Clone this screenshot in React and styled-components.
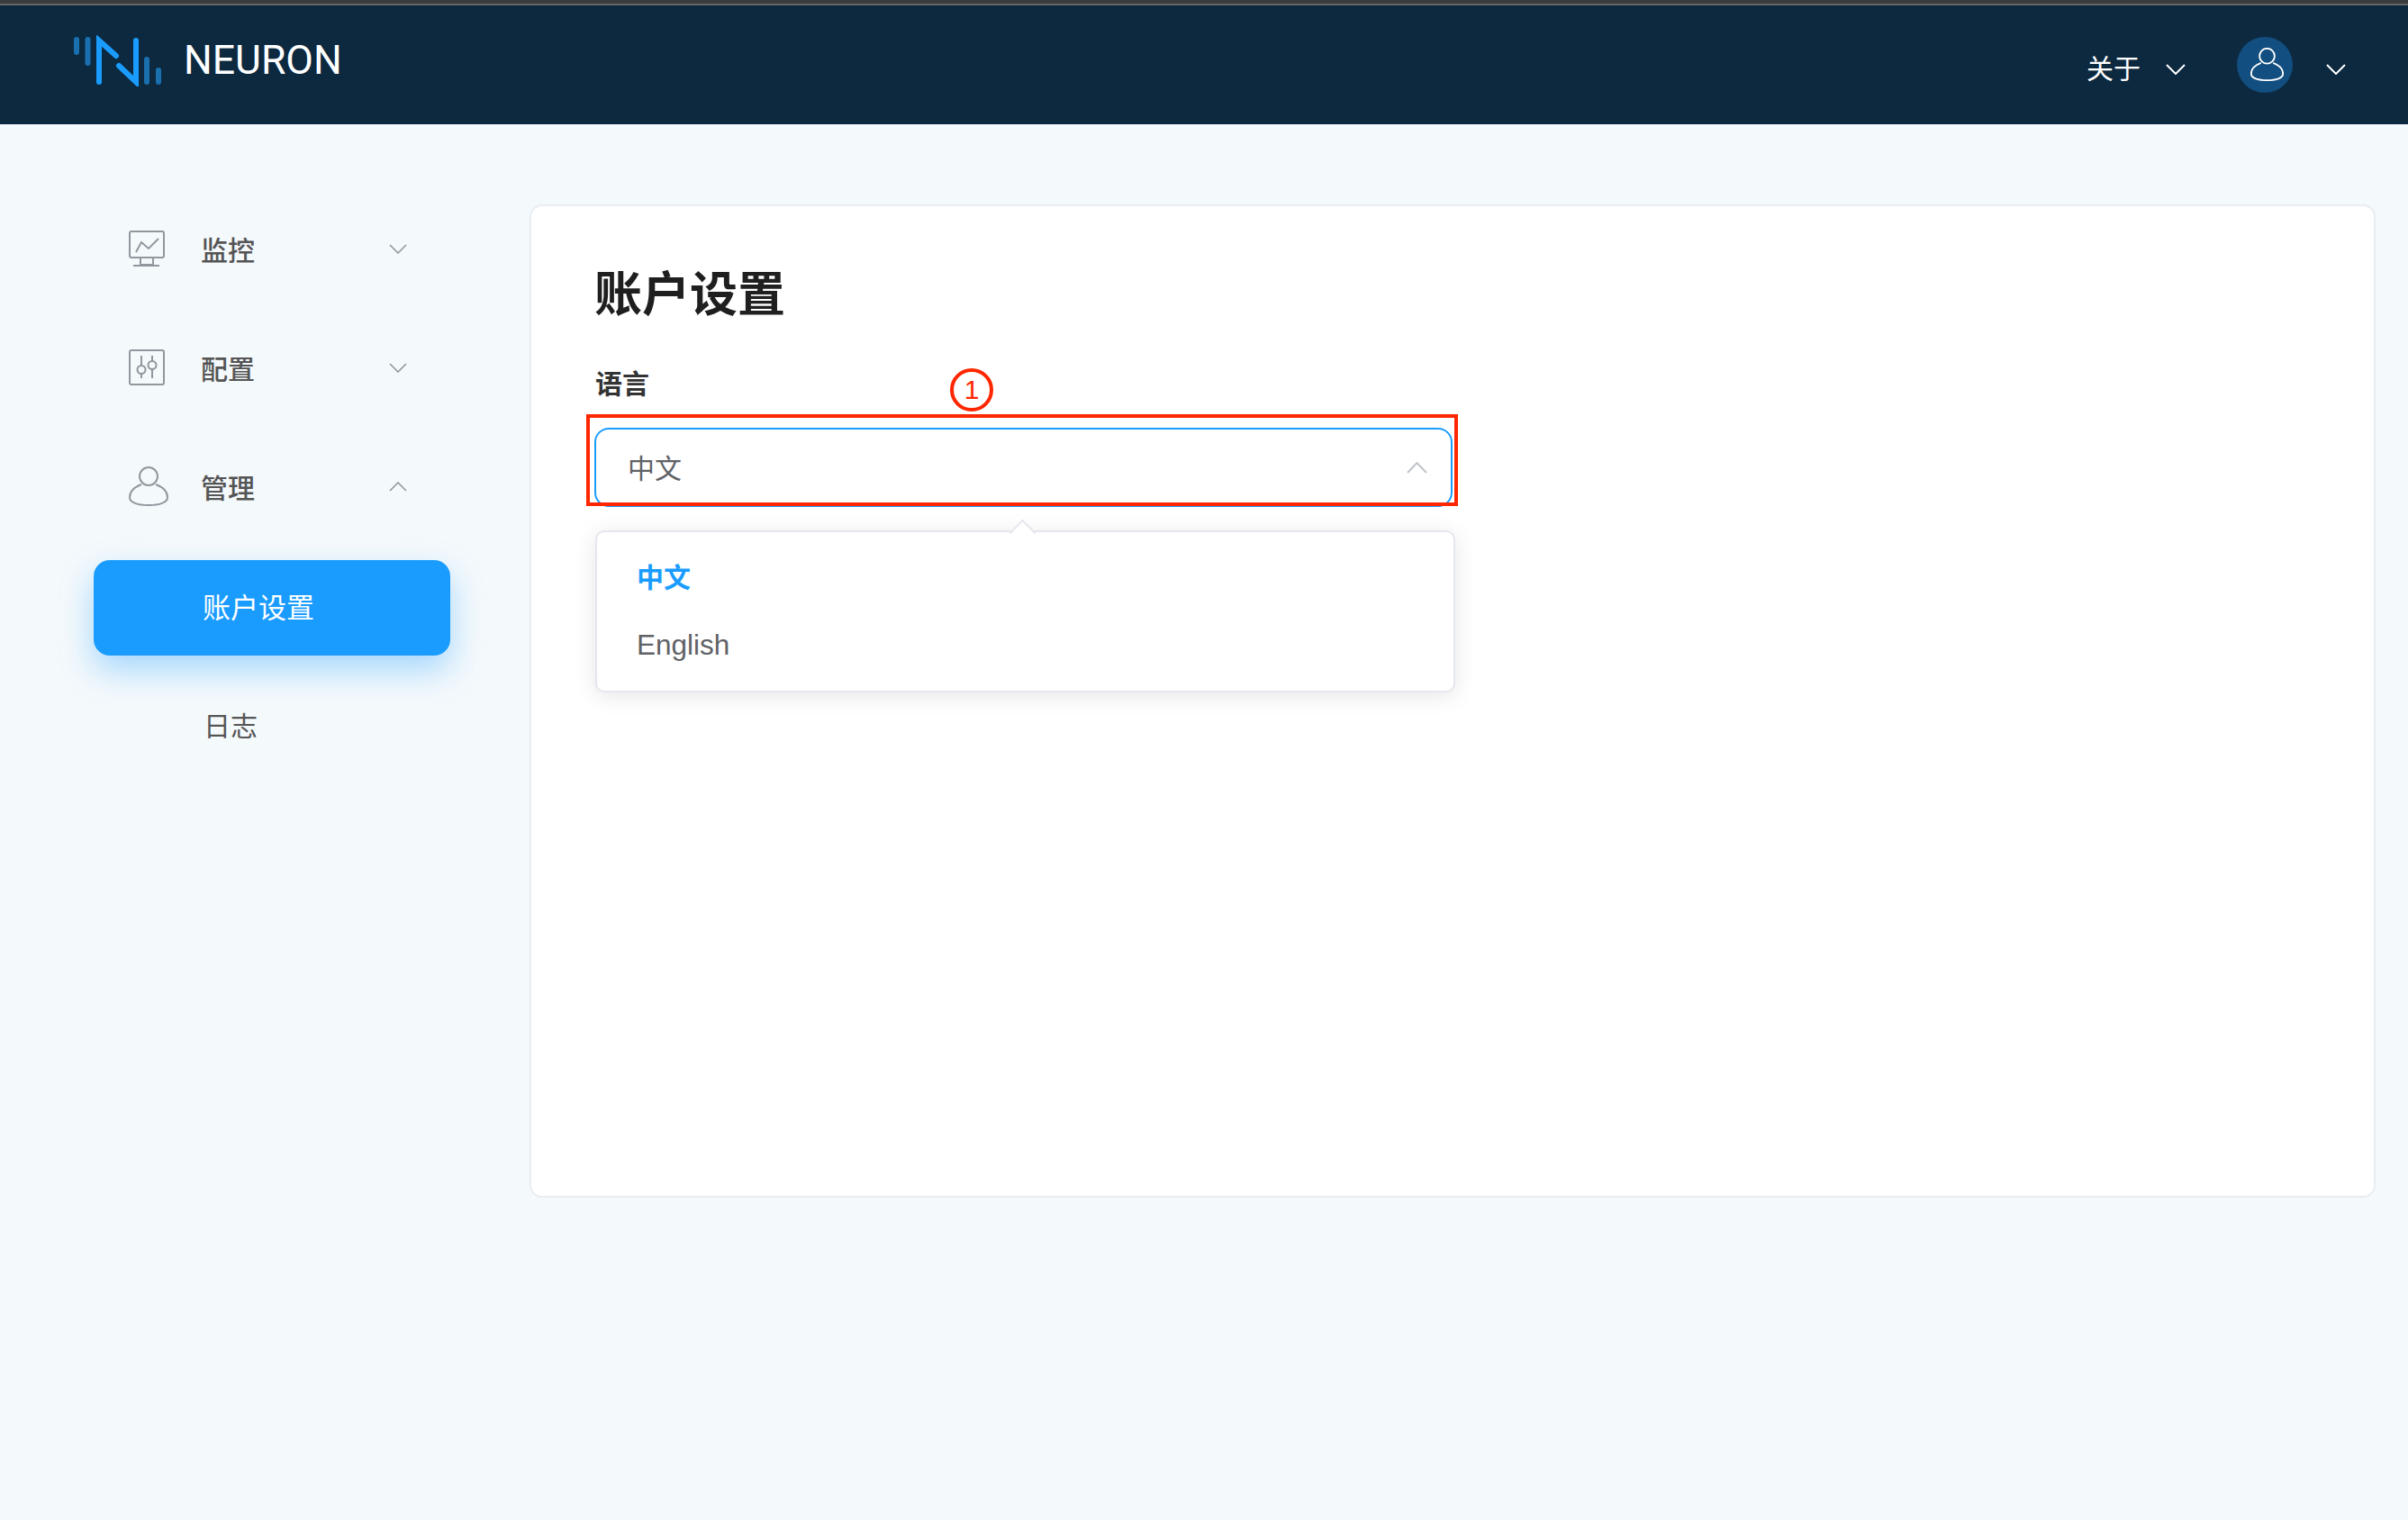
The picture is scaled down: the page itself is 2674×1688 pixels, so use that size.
import React from "react";
import styled, { createGlobalStyle } from "styled-components";

const GlobalStyle = createGlobalStyle`
  html, body {
    margin: 0;
    padding: 0;
    background: #f4f9fc;
  }
  * {
    box-sizing: border-box;
  }
  body {
    font-family: "Liberation Sans", "Noto Sans CJK SC", sans-serif;
  }
`;

const Page = styled.div`
  width: 2674px;
  height: 1688px;
  overflow: hidden;
  background: #f4f9fc;
`;

const Header = styled.header`
  height: 138px;
  background: #0c2940;
  border-top: 4px solid #3c3c3c;
  display: flex;
  align-items: flex-start;
  position: relative;
  &::before {
    content: "";
    display: block;
    position: absolute;
    left: 0;
    right: 0;
    top: 0;
    height: 2px;
    background: #666;
  }
`;

const Logo = styled.div`
  display: flex;
  align-items: center;
  margin: 34px 0 0 80px;
  gap: 22px;
`;

const Brand = styled.span`
  font-family: "Roboto", sans-serif;
  font-size: 44.500px;
  line-height: 58px;
  color: #fff;
`;

const HeaderRight = styled.div`
  margin: 37px 0 0 auto;
  padding-right: 69px;
  display: flex;
  align-items: flex-start;
`;

const HeaderLabel = styled.span`
  font-size: 30px;
  line-height: 62px;
  margin-top: 5px;
  color: #fff;
`;

const Avatar = styled.div`
  width: 62px;
  height: 62px;
  border-radius: 50%;
  background: #124e7f;
  display: flex;
  align-items: center;
  justify-content: center;
  margin: 0 37px 0 57px;
  padding: 0 0 2px 4px;
`;

const Main = styled.div`
  display: flex;
  align-items: flex-start;
`;

const Sidebar = styled.nav`
  width: 396px;
  margin: 85px 88px 0 104px;
  display: flex;
  flex-direction: column;
  gap: 26px;
`;

const MenuItem = styled.div`
  height: 106px;
  display: flex;
  align-items: center;
  padding: 0 48px 0 39px;
  font-size: 30px;
  font-weight: 500;
  color: #555;
`;

const IconSlot = styled.span`
  width: 80px;
  display: flex;
  align-items: center;
`;

const LeafItem = styled.div`
  height: 106px;
  display: flex;
  align-items: center;
  margin-top: ${(p) => (p.$active ? "3px" : "0")};
  padding: ${(p) => (p.$active ? "0 0 5px 121px" : "0 0 6px 122px")};
  font-size: ${(p) => (p.$active ? "31px" : "30px")};
  border-radius: 18px;
  color: ${(p) => (p.$active ? "#fff" : "#555")};
  background: ${(p) => (p.$active ? "#1a9cff" : "transparent")};
  box-shadow: ${(p) =>
    p.$active ? "0 16px 36px rgba(26, 156, 255, 0.36)" : "none"};
`;

const ChevronSvg = styled.svg`
  display: block;
  flex: none;
  margin-left: ${(p) => p.$ml || "0"};
  margin-top: ${(p) => p.$mt || "0"};
`;

const PushRight = styled.span`
  margin-left: auto;
  display: flex;
`;

const Card = styled.section`
  width: 2050px;
  height: 1103px;
  margin-top: 89px;
  background: #fff;
  border: 2px solid #e9edf3;
  border-radius: 14px;
  padding: 69px 70px;
`;

const Title = styled.h1`
  margin: 0;
  font-size: 53px;
  line-height: 60px;
  font-weight: 700;
  color: #1f1f1f;
`;

const FieldLabel = styled.div`
  margin: 49px 0 0 1px;
  font-size: 30px;
  line-height: 40px;
  font-weight: 700;
  color: #333;
`;

const Field = styled.div`
  position: relative;
  width: 953px;
  margin-top: 28px;
`;

const SelectBox = styled.div`
  height: 88px;
  border: 2px solid #1a9cff;
  border-radius: 16px;
  display: flex;
  align-items: center;
  justify-content: space-between;
  padding: 0 26px 0 35px;
  font-size: 30px;
  color: #606266;
`;

const SelectValue = styled.span`
  margin-top: -3px;
`;

const RedFrame = styled.div`
  position: absolute;
  left: -9px;
  top: -15px;
  width: 968px;
  height: 102px;
  border: 4px solid #ff2600;
`;

const Marker = styled.div`
  position: absolute;
  left: 395px;
  top: -66px;
  width: 48px;
  height: 48px;
  border: 4px solid #ff2600;
  border-radius: 50%;
  color: #ff2600;
  font-size: 30px;
  line-height: 40px;
  text-align: center;
`;

const Dropdown = styled.div`
  position: absolute;
  left: 1px;
  top: 114px;
  width: 955px;
  height: 180px;
  background: #fff;
  border: 2px solid #e4e7ed;
  border-radius: 10px;
  box-shadow: 0 4px 24px rgba(0, 0, 0, 0.1);
  padding: 14px 0;
  &::before {
    content: "";
    position: absolute;
    left: 462px;
    top: -10px;
    width: 19px;
    height: 19px;
    background: #fff;
    border-left: 2px solid #e4e7ed;
    border-top: 2px solid #e4e7ed;
    transform: rotate(45deg);
  }
`;

const Option = styled.div`
  height: 74px;
  line-height: 74px;
  padding-left: 44px;
  font-size: ${(p) => (p.$selected ? "30px" : "31.500px")};
  font-weight: ${(p) => (p.$selected ? 700 : 400)};
  color: ${(p) => (p.$selected ? "#1a9cff" : "#606266")};
`;

const Chevron = ({ up, color, width = 22, height = 12, ml, mt, strokeWidth = 2 }) => (
  <ChevronSvg $ml={ml} $mt={mt} width={width} height={height} viewBox={`0 0 ${width} ${height}`} fill="none">
    <polyline
      points={
        up
          ? `1,${height - 1} ${width / 2},1 ${width - 1},${height - 1}`
          : `1,1 ${width / 2},${height - 1} ${width - 1},1`
      }
      stroke={color}
      strokeWidth={strokeWidth}
    />
  </ChevronSvg>
);

const NeuronLogo = () => (
  <svg width="102" height="57" viewBox="80 38 102 57" fill="none" strokeLinecap="round" strokeWidth="6">
    <g stroke="#1a6fae">
      <line x1="85" y1="43" x2="85" y2="57" />
      <line x1="97.500" y1="43" x2="97.500" y2="69" />
      <line x1="163" y1="65" x2="163" y2="90" />
      <line x1="176" y1="77" x2="176" y2="90" />
    </g>
    <g stroke="#1a9cff">
      <polyline points="110,90 110,44 129,61" />
      <polyline points="132,72 151,90 151,44" />
    </g>
  </svg>
);

const UserIcon = ({ size, color, strokeWidth }) => (
  <svg width={size} height={size} viewBox="0 0 44 44" fill="none" stroke={color} strokeWidth={strokeWidth}>
    <circle cx="22" cy="11" r="10" />
    <path d="M14 20C6 23 1 28 1 34.500C1 40 10 43 22 43C34 43 43 40 43 34.500C43 28 38 23 30 20" />
  </svg>
);

const MonitorIcon = () => (
  <svg width="40" height="40" viewBox="0 0 40 40" fill="none" stroke="#92979e" strokeWidth="2">
    <rect x="1" y="1" width="38" height="29" rx="2" />
    <polyline points="8,24 14,13 22,20 33,9" />
    <polyline points="13,30 13,38 27,38 27,30" />
    <line x1="5" y1="39" x2="34" y2="39" />
  </svg>
);

const SlidersIcon = () => (
  <svg width="40" height="40" viewBox="0 0 40 40" fill="none" stroke="#92979e" strokeWidth="2">
    <rect x="1" y="1" width="38" height="38" rx="2" />
    <line x1="14" y1="7" x2="14" y2="18" />
    <circle cx="14" cy="22.500" r="4.500" />
    <line x1="14" y1="27" x2="14" y2="32" />
    <line x1="26" y1="7" x2="26" y2="13" />
    <circle cx="26" cy="17.500" r="4.500" />
    <line x1="26" y1="22" x2="26" y2="32" />
  </svg>
);

const menu = [
  { label: "监控", icon: <MonitorIcon /> },
  { label: "配置", icon: <SlidersIcon /> },
  { label: "管理", icon: <UserIcon size={44} color="#92979e" strokeWidth={2} />, open: true },
];

export default function App() {
  return (
    <Page>
      <GlobalStyle />
      <Header>
        <Logo>
          <NeuronLogo />
          <Brand>NEURON</Brand>
        </Logo>
        <HeaderRight>
          <HeaderLabel>关于</HeaderLabel>
          <Chevron color="#fff" ml="28px" mt="30px" />
          <Avatar>
            <UserIcon size={37} color="#fff" strokeWidth={2.2} />
          </Avatar>
          <Chevron color="#fff" mt="30px" />
        </HeaderRight>
      </Header>
      <Main>
        <Sidebar>
          {menu.map((item) => (
            <MenuItem key={item.label}>
              <IconSlot>{item.icon}</IconSlot>
              {item.label}
              <PushRight>
                <Chevron up={item.open} color="#92979e" width={20} height={11} strokeWidth={1.6} />
              </PushRight>
            </MenuItem>
          ))}
          <LeafItem $active>账户设置</LeafItem>
          <LeafItem>日志</LeafItem>
        </Sidebar>
        <Card>
          <Title>账户设置</Title>
          <FieldLabel>语言</FieldLabel>
          <Field>
            <SelectBox>
              <SelectValue>中文</SelectValue>
              <Chevron up color="#c0c4cc" width={23} height={13} />
            </SelectBox>
            <RedFrame />
            <Marker>1</Marker>
            <Dropdown>
              <Option $selected>中文</Option>
              <Option>English</Option>
            </Dropdown>
          </Field>
        </Card>
      </Main>
    </Page>
  );
}
